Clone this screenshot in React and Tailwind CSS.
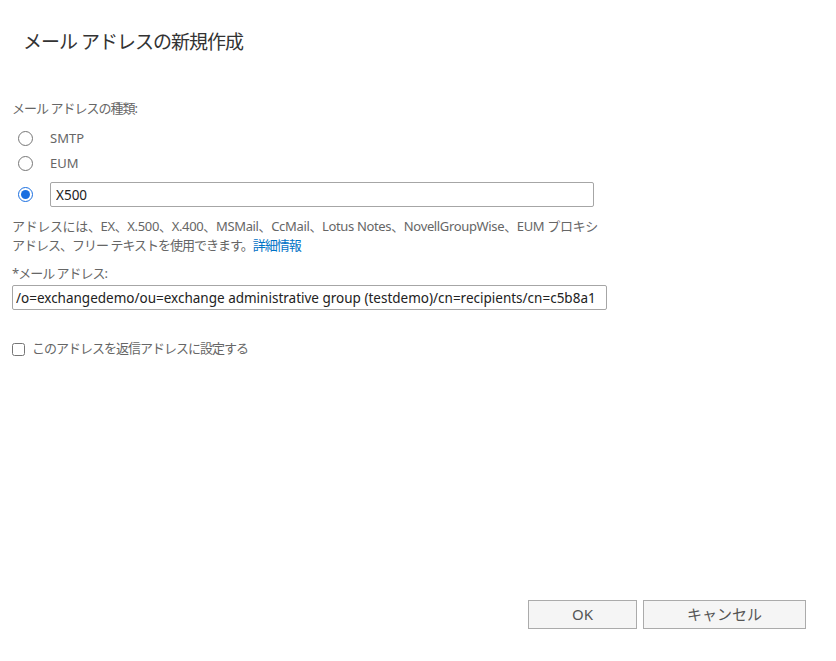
import { useState } from "react";

const font = "font-['Noto_Sans','Noto_Sans_CJK_JP',sans-serif]";

function RadioRow({ checked, onSelect, children, className = "" }) {
  return (
    <div className={`flex items-center h-[25px] ${className}`}>
      <div className="w-[38px] flex items-center">
        <input
          type="radio"
          name="addrType"
          checked={checked}
          onChange={onSelect}
          className="ml-[6px] w-[15px] h-[15px] m-0 accent-[#1a6fe0]"
        />
      </div>
      {children}
    </div>
  );
}

export default function App() {
  const [type, setType] = useState("x500");
  const [reply, setReply] = useState(false);

  return (
    <div
      className={`w-[836px] h-[661px] bg-white flex flex-col text-[#333] ${font}`}
    >
      <h1 className="pl-[23px] pt-[28px] text-[19px] leading-[28px] tracking-[-1px] text-[#333] font-normal">
        メール アドレスの新規作成
      </h1>

      <div className="px-[12px] mt-[42px] w-[619px]">
        <div className="text-[13px] leading-[20px] tracking-[-1px] text-[#666]">
          メール アドレスの種類:
        </div>

        <RadioRow
          className="mt-[8px]"
          checked={type === "smtp"}
          onSelect={() => setType("smtp")}
        >
          <span className="text-[13px] text-[#666]">SMTP</span>
        </RadioRow>
        <RadioRow checked={type === "eum"} onSelect={() => setType("eum")}>
          <span className="text-[13px] text-[#666]">EUM</span>
        </RadioRow>
        <RadioRow
          className="mt-[6px]"
          checked={type === "x500"}
          onSelect={() => setType("x500")}
        >
          <input
            type="text"
            defaultValue="X500"
            className="w-[544px] h-[25px] border border-[#a6a6a6] rounded-[2px] px-[5px] text-[13.5px] text-[#222] outline-none"
          />
        </RadioRow>

        <p className="mt-[10px] text-[13px] leading-[19px] tracking-[-0.35px] text-[#666] whitespace-nowrap">
          アドレスには、EX、X.500、X.400、MSMail、CcMail、Lotus Notes、NovellGroupWise、EUM プロキシ
          <br />
          <span className="tracking-[-1px]">
            アドレス、フリー テキストを使用できます。
            <a href="#" className="text-[#0072c6]">
              詳細情報
            </a>
          </span>
        </p>

        <div className="mt-[8px] text-[13px] leading-[20px] tracking-[-1px] text-[#666]">
          *メール アドレス:
        </div>
        <input
          type="text"
          defaultValue="/o=exchangedemo/ou=exchange administrative group (testdemo)/cn=recipients/cn=c5b8a1"
          className="mt-[2px] w-[595px] h-[25px] border border-[#a6a6a6] rounded-[2px] px-[3px] text-[13.5px] text-[#222] outline-none"
        />

        <label className="mt-[29px] flex items-center h-[20px] gap-[7px] text-[13px] tracking-[-1px] text-[#666]">
          <input
            type="checkbox"
            checked={reply}
            onChange={() => setReply((prev) => !prev)}
            className="m-0 w-[13px] h-[13px]"
          />
          このアドレスを返信アドレスに設定する
        </label>
      </div>

      <div className="mt-auto pb-[32px] pr-[30px] flex justify-end gap-[6px]">
        <button className="w-[109px] h-[29px] border border-[#ababab] bg-[#f5f5f5] text-[15px] text-[#555]">
          OK
        </button>
        <button className="w-[163px] h-[29px] border border-[#ababab] bg-[#f5f5f5] text-[15px] text-[#555]">
          キャンセル
        </button>
      </div>
    </div>
  );
}
